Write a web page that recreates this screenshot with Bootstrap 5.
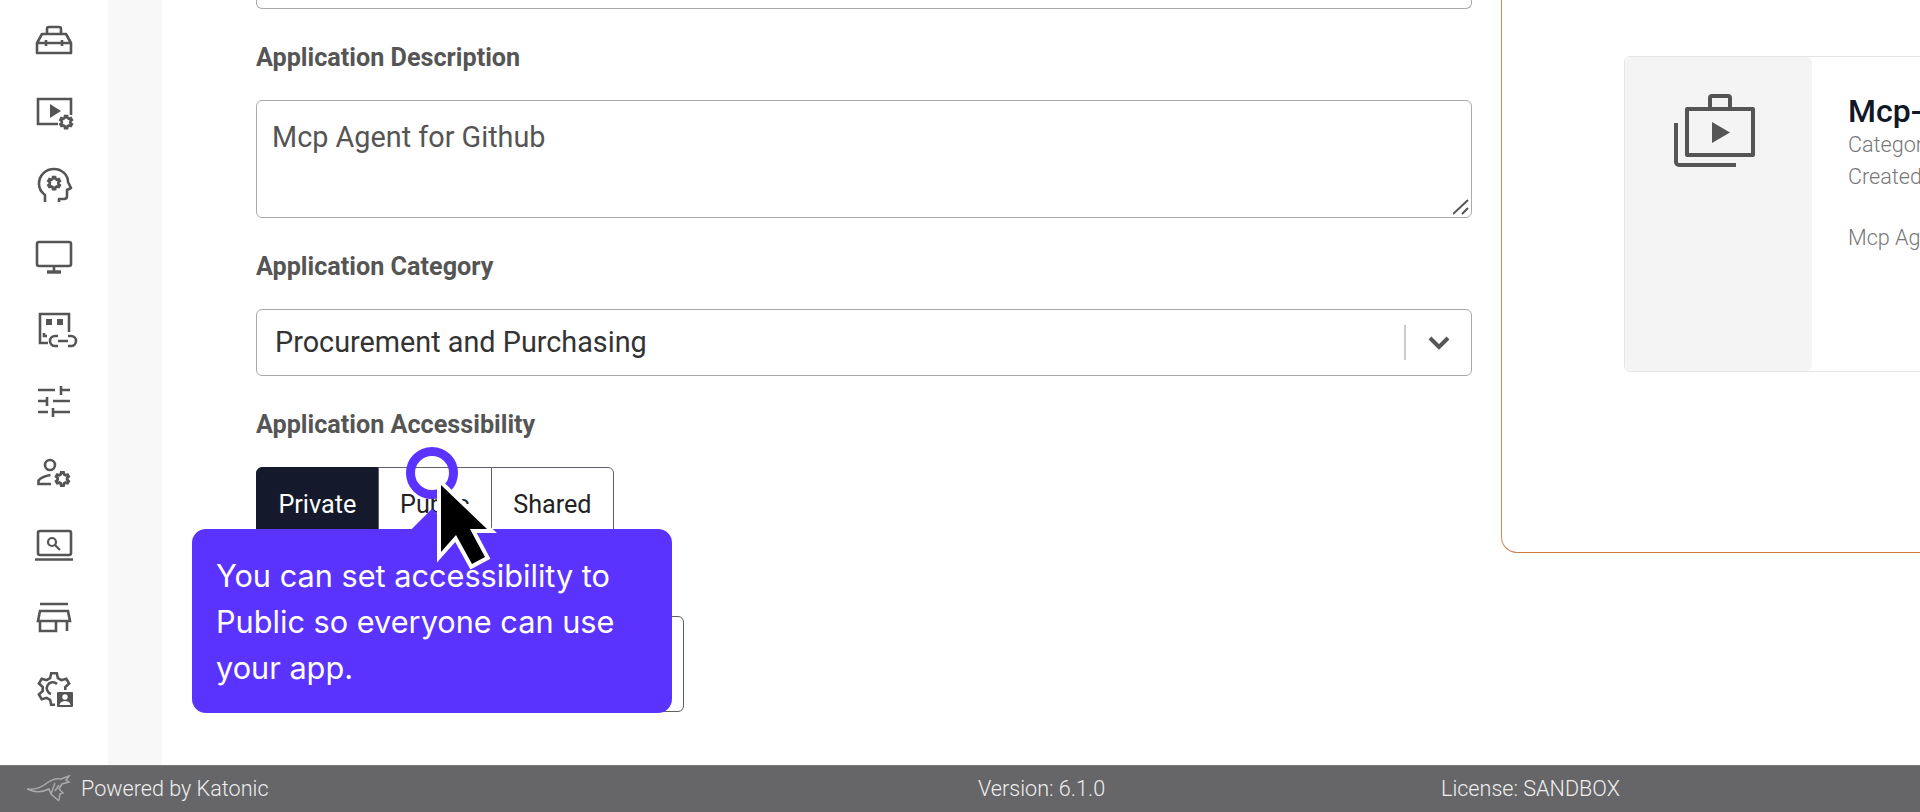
<!DOCTYPE html>
<html lang="en">
<head>
    <meta charset="UTF-8">
    <meta name="viewport" content="width=device-width, initial-scale=1.0">
    <title>Create Application</title>
    <link href="https://cdn.jsdelivr.net/npm/bootstrap@5.3.3/dist/css/bootstrap.min.css" rel="stylesheet">
    <style>
        body {
            height: 100vh;
            overflow: hidden;
            font-family: Roboto, "Liberation Sans", sans-serif;
            position: relative;
        }

        .side-rail { width: 108px; padding-top: 21px; }
        .side-item { height: 72px; }
        .side-item svg { width: 40px; height: 40px; overflow: visible; fill: none; stroke: #555; stroke-width: 2.6; }
        .grey-strip { width: 54px; background: #f8f8f8; }

        .form-pane { width: 1310px; padding-left: 94px; }
        .cut-input {
            height: 9px;
            border: 1px solid #aaa;
            border-top: 0;
            border-radius: 0 0 6px 6px;
            margin-bottom: 34px;
        }
        .field-label {
            display: block;
            font-size: 25.2px;
            font-weight: 700;
            line-height: 30px;
            color: #555;
            margin-bottom: 27px;
        }
        .desc-wrap { margin-bottom: 34px; }
        .desc-input.form-control {
            display: block;
            height: 118px;
            border-color: #aaa;
            border-radius: 6px;
            padding: 16px 15px;
            font-size: 28.8px;
            line-height: 40px;
            color: #555;
            resize: none;
        }
        .desc-grip { position: absolute; right: 3px; bottom: 3px; }
        .select-box {
            height: 67px;
            border: 1px solid #aaa;
            border-radius: 6px;
            padding-left: 18px;
            font-size: 28.8px;
            color: #333;
            margin-bottom: 34px;
        }
        .select-divider { width: 2px; height: 35px; background: #ccc; }
        .select-arrow { width: 65px; }

        .access-group { width: 358px; margin-top: 4px; }
        .access-group .btn {
            height: 72px;
            padding: 3px 0 0;
            font-size: 25.2px;
            line-height: 30px;
            background: #fff;
            border-color: #5e6068;
            color: #222;
            text-align: center;
            vertical-align: top;
        }
        .access-group .btn.is-picked { background: #141a2b; border-color: #141a2b; color: #fff; }
        .next-box {
            width: 428px;
            height: 96px;
            margin-top: 77px;
            border: 1px solid #5e6068;
            border-radius: 6px;
        }

        .preview-pane {
            flex: 1 1 auto;
            min-width: 0;
            height: 553px;
            margin-left: 29px;
            padding: 56px 0 0 122px;
            border-left: 1px solid #c98a5a;
            border-bottom: 1px solid #d07a45;
            border-radius: 0 0 0 16px;
        }
        .app-tile {
            width: 700px;
            height: 316px;
            border: 1px solid #e4e4e4;
            border-radius: 6px;
        }
        .tile-thumb { width: 187px; background: #f4f4f4; border-radius: 6px; padding: 36px 0 0 49px; }
        .tile-thumb svg { width: 90px; height: 80px; overflow: visible; }
        .tile-body { padding: 35px 0 0 36px; white-space: nowrap; color: #777; font-size: 21.6px; font-weight: 300; line-height: 32px; }
        .tile-title { font-size: 32px; font-weight: 500; line-height: 38px; color: #101828; margin-bottom: -1px; }
        .tile-note { margin-top: 29px; }

        .foot-bar {
            height: 47px;
            background: #666668;
            border-top: 1px solid #777;
            color: #eee;
            font-size: 21.6px;
            font-weight: 300;
        }
        .foot-brand { width: 978px; padding-left: 27px; }
        .foot-version { width: 463px; }

        .tour-ring {
            position: absolute;
            left: 406px;
            top: 447px;
            width: 52px;
            height: 52px;
            border: 9px solid #5b33ff;
            border-radius: 50%;
        }
        .tour-tip {
            position: absolute;
            left: 192px;
            top: 529px;
            width: 480px;
            height: 184px;
            padding: 24px;
            background: #5b33ff;
            border-radius: 14px;
            color: #fff;
            font-family: Inter, "Noto Sans", sans-serif;
            font-size: 30.7px;
            line-height: 46px;
        }
        .tour-tip::before {
            content: "";
            position: absolute;
            left: 225px;
            top: -14px;
            width: 30px;
            height: 30px;
            background: #5b33ff;
            transform: rotate(45deg);
        }
        .tour-cursor { position: absolute; left: 0; top: 0; width: 1920px; height: 812px; pointer-events: none; }
    </style>
</head>
<body class="d-flex flex-column">
    <svg width="0" height="0" class="position-absolute">
        <defs>
            <path id="cog" d="M16.1 9.2 17.2 4.2H22.8L23.9 9.2 27.4 11.2 32.3 9.7 35.1 14.5 31.3 18V22L35.1 25.5 32.3 30.3 27.4 28.8 23.9 30.8 22.8 35.8H17.2L16.1 30.8 12.6 28.8 7.7 30.3 4.9 25.5 8.7 22V18L4.9 14.5 7.7 9.7 12.6 11.2Z"/>
        </defs>
    </svg>

    <div class="d-flex flex-grow-1 overflow-hidden">
        <!-- icon rail -->
        <nav class="side-rail flex-shrink-0 d-flex flex-column align-items-center">
            <div class="side-item"><svg viewBox="0 0 40 40"><path d="M13 13V8a2 2 0 0 1 2-2h10a2 2 0 0 1 2 2v5M8 13h24l5 9v10H3V22zM3 22h34M12 19v6M28 19v6" stroke-linejoin="round"/></svg></div>
            <div class="side-item"><svg viewBox="0 0 40 40"><path d="M37 22V6H4v25h20"/><path d="M16 11l11 7-11 7z" fill="#555" stroke="none"/><use href="#cog" transform="translate(24.5 21.5) scale(.38)" stroke-width="7"/></svg></div>
            <div class="side-item"><svg viewBox="0 0 40 40"><path d="M11 37v-7c-4-3-6-7-6-11C5 10 12 4 20 4s14 6 14 13l3 6-4 2v6c0 2-1 3-3 3h-5v3" stroke-linejoin="round"/><use href="#cog" transform="translate(12.5 10.5) scale(.38)" stroke-width="7"/></svg></div>
            <div class="side-item"><svg viewBox="0 0 40 40"><rect x="3" y="5" width="34" height="24" rx="2"/><path d="M20 29v5"/><path d="M13 35h14" stroke-width="3.4"/></svg></div>
            <div class="side-item"><svg viewBox="0 0 40 40"><path d="M14 34H6V5h29v18"/><path d="M12 10h6v6h-6zM23 10h6v6h-6z" fill="#555" stroke="none"/><path d="M13 27h-3v-3" /><path d="M24 27h-3a4.5 4.5 0 0 0 0 10h3M34 27h3a4.5 4.5 0 0 1 0 10h-3M24 32h10"/></svg></div>
            <div class="side-item"><svg viewBox="0 0 40 40"><path d="M4 9h17M27 5v9M27 9h9M4 20h9M13 16v9M19 20h17M4 31h10M19 27v9M19 31h17"/></svg></div>
            <div class="side-item"><svg viewBox="0 0 40 40"><circle cx="16" cy="12" r="5"/><path d="M17 31H4.500v-3.500c2-2.500 6-4.500 12-5.500"/><use href="#cog" transform="translate(20 17.500) scale(.42)" stroke-width="6.500"/></svg></div>
            <div class="side-item"><svg viewBox="0 0 40 40"><rect x="4" y="6" width="33" height="24" rx="2"/><path d="M1 34.500h38"/><circle cx="18" cy="17" r="4" stroke-width="2.200"/><path d="M21 20l5 5" stroke-width="2.200"/></svg></div>
            <div class="side-item"><svg viewBox="0 0 40 40"><path d="M6 7h28M6 14h28l2 10H4zM6 24v10h16V24M33 24v10"/></svg></div>
            <div class="side-item"><svg viewBox="0 0 40 40"><use href="#cog"/><path d="M23 15a6 6 0 1 0-6 10"/><rect x="22" y="22" width="18" height="17" rx="2" fill="#555" stroke="#fff" stroke-width="2"/><circle cx="31" cy="28" r="2.700" fill="#fff" stroke="none"/><path d="M25.500 36c.5-3 3-4 5.500-4s5 1 5.500 4z" fill="#fff" stroke="none"/></svg></div>
        </nav>
        <div class="grey-strip flex-shrink-0"></div>

        <!-- form -->
        <main class="form-pane flex-shrink-0">
            <div class="cut-input"></div>

            <label class="field-label" for="appDescription">Application Description</label>
            <div class="desc-wrap position-relative">
                <textarea id="appDescription" class="form-control desc-input">Mcp Agent for Github</textarea>
                <svg class="desc-grip" width="16" height="16" viewBox="0 0 16 16" stroke="#555" stroke-width="2"><path d="M0 15 15 1M9 15l6-6"/></svg>
            </div>

            <label class="field-label">Application Category</label>
            <div class="select-box d-flex align-items-center">
                <span class="flex-grow-1">Procurement and Purchasing</span>
                <span class="select-divider"></span>
                <span class="select-arrow d-flex justify-content-center">
                    <svg width="22" height="14" viewBox="0 0 22 14" fill="none" stroke="#555" stroke-width="4"><path d="M2 2l9 9 9-9"/></svg>
                </span>
            </div>

            <label class="field-label">Application Accessibility</label>
            <div class="btn-group access-group d-flex" role="group">
                <button type="button" class="btn is-picked">Private</button>
                <button type="button" class="btn">Public</button>
                <button type="button" class="btn">Shared</button>
            </div>
            <div class="next-box"></div>
        </main>

        <!-- preview -->
        <aside class="preview-pane overflow-hidden">
            <div class="app-tile d-flex">
                <div class="tile-thumb flex-shrink-0">
                    <svg viewBox="0 0 90 80" fill="none" stroke="#555" stroke-width="4">
                        <path d="M13 16h66v46H13z" stroke-linejoin="round"/>
                        <path d="M36 16V5a2 2 0 0 1 2-2h16a2 2 0 0 1 2 2v11"/>
                        <path d="M2 30v39a3 3 0 0 0 3 3h57"/>
                        <path d="M38 29l18 10.500-18 10.500z" fill="#555" stroke="none"/>
                    </svg>
                </div>
                <div class="tile-body">
                    <div class="tile-title">Mcp-Github-Agent</div>
                    <div>Category: Procurement and Purchasing</div>
                    <div>Created by: Admin</div>
                    <div class="tile-note">Mcp Agent for Github</div>
                </div>
            </div>
        </aside>
    </div>

    <footer class="foot-bar d-flex align-items-center flex-shrink-0">
        <div class="foot-brand d-flex align-items-center gap-2">
            <svg width="46" height="28" viewBox="0 0 46 28" fill="none" stroke="#a9a9ab" stroke-width="1.500">
                <path d="M0 14c8 1 14-1 20-6 4-3 10-5 14-4l8-3-3 4 3 2-7 2-3 5 4 4-3 1-1 6"/>
                <path d="M0 14c8 4 16 3 22 0l2 5 8 7M28 8l-4 11M32 10l-4 6"/>
            </svg>
            <span>Powered by Katonic</span>
        </div>
        <div class="foot-version">Version: 6.1.0</div>
        <div>License: SANDBOX</div>
    </footer>

    <!-- product tour overlay -->
    <div class="tour-ring"></div>
    <div class="tour-tip">You can set accessibility to<br>Public so everyone can use<br>your app.</div>
    <svg class="tour-cursor" viewBox="0 0 1920 812">
        <path d="M441 485V552L456 535 472 564 485 557 470 529H487Z" fill="#000" stroke="#fff" stroke-width="8" stroke-miterlimit="6" paint-order="stroke"/>
    </svg>

    <script src="https://cdn.jsdelivr.net/npm/bootstrap@5.3.3/dist/js/bootstrap.bundle.min.js"></script>
</body>
</html>
